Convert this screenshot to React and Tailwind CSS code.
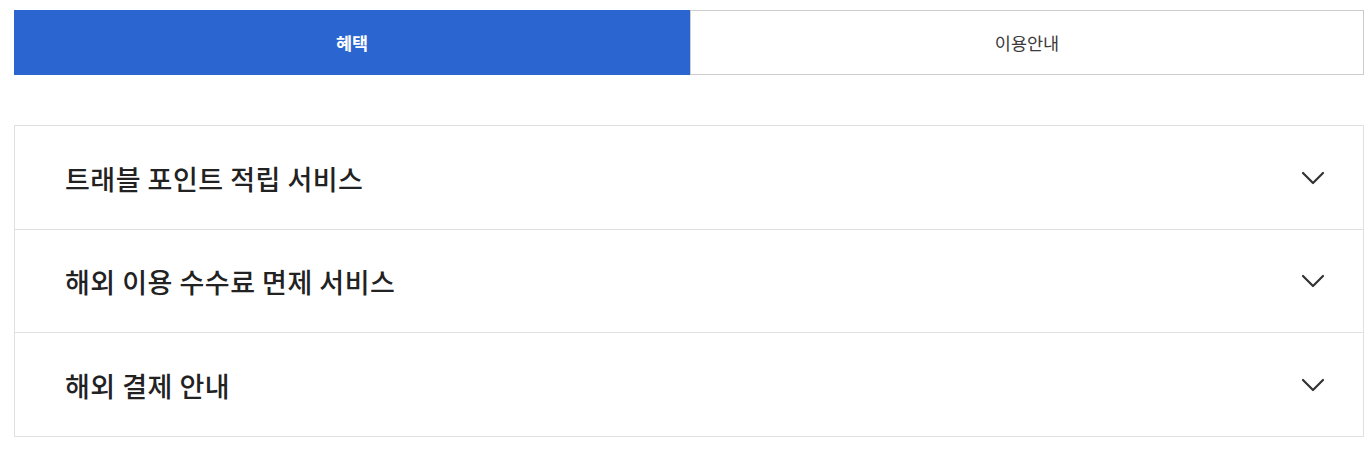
import { useState } from 'react';

const items = [
  { id: 'point', title: '트래블 포인트 적립 서비스', h: 'h-[103px]' },
  { id: 'fee', title: '해외 이용 수수료 면제 서비스', h: 'h-[102px]' },
  { id: 'pay', title: '해외 결제 안내', h: 'h-[103px]' },
];

function Chevron() {
  return (
    <svg width="24" height="14" viewBox="0 0 24 14" fill="none" className="text-[#333]">
      <path d="M2 2l10 10L22 2" stroke="currentColor" strokeWidth="2.2" strokeLinecap="round" strokeLinejoin="round" />
    </svg>
  );
}

export default function App() {
  const [activeTab, setActiveTab] = useState('benefit');
  const [open, setOpen] = useState(null);

  const tabs = [
    { id: 'benefit', label: '혜택', w: 'w-[676px]' },
    { id: 'guide', label: '이용안내', w: 'flex-1' },
  ];

  return (
    <div className="bg-white min-h-screen pt-[10px] pl-[14px] font-['Noto_Sans_CJK_KR','Noto_Sans',sans-serif]">
      <div className="w-[1350px]">
        {/* Tabs */}
        <div className="flex h-[65px]">
          {tabs.map((tab) => (
            <button
              key={tab.id}
              onClick={() => setActiveTab(tab.id)}
              className={`${tab.w} flex items-center justify-center pt-[2px] text-[17.5px] ${
                activeTab === tab.id
                  ? 'bg-[#2b65d0] text-white font-bold'
                  : 'bg-white text-[#3a3a3a] border border-[#cccccc]'
              }`}
            >
              {tab.label}
            </button>
          ))}
        </div>

        {/* Accordion */}
        <div className="mt-[50px] border border-[#e0e0e0]">
          {items.map((item, i) => (
            <div key={item.id} className={i > 0 ? 'border-t border-[#e0e0e0]' : ''}>
              <button
                onClick={() => setOpen(open === item.id ? null : item.id)}
                className={`w-full ${item.h} flex items-center justify-between pl-[50px] pr-[38px]`}
              >
                <span className="text-[27px] font-medium text-[#222] tracking-[0.5px] pt-[3px]">{item.title}</span>
                <Chevron />
              </button>
            </div>
          ))}
        </div>
      </div>
    </div>
  );
}
